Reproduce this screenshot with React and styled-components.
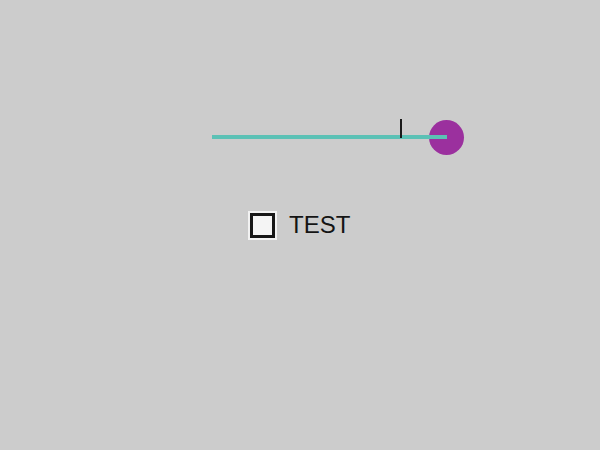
import React from "react";
import styled, { createGlobalStyle } from "styled-components";

const Global = createGlobalStyle`
  html, body { margin: 0; padding: 0; background: #cccccc; }
  body { font-family: "Liberation Sans", Arial, sans-serif; }
`;

const Page = styled.div`
  width: 600px;
  height: 450px;
  box-sizing: border-box;
  padding-top: 119px;
  display: flex;
  flex-direction: column;
  align-items: flex-start;
`;

const Slider = styled.div`
  position: relative;
  margin-left: 212px;
  width: 235px;
  height: 36px;
`;

const Thumb = styled.div`
  position: absolute;
  left: 216.5px;
  top: 0.5px;
  width: 35px;
  height: 35px;
  border-radius: 50%;
  background: #9b309e;
`;

const Track = styled.div`
  position: absolute;
  left: 0;
  right: 0;
  top: 16px;
  height: 3.5px;
  background: #5bc1b5;
`;

const Tick = styled.div`
  position: absolute;
  left: ${(p) => p.$at}px;
  top: 0;
  width: 2px;
  height: 19px;
  background: #1a1a1a;
`;

const CheckRow = styled.label`
  margin-top: 55px;
  margin-left: 248px;
  display: flex;
  align-items: center;
  gap: 12px;
  cursor: pointer;
`;

const Box = styled.span`
  width: 25px;
  height: 25px;
  box-sizing: border-box;
  border: 3px solid #161616;
  background: #f4f4f4;
  outline: 2px solid #f2f2f2;
  margin: 2px;
  display: block;
`;

const Label = styled.span`
  font-size: 24px;
  line-height: 30px;
  color: #141414;
`;

export default function App() {
  return (
    <>
      <Global />
      <Page>
        <Slider>
          <Thumb />
          <Track />
          <Tick $at={188} />
        </Slider>
        <CheckRow>
          <Box />
          <Label>TEST</Label>
        </CheckRow>
      </Page>
    </>
  );
}
